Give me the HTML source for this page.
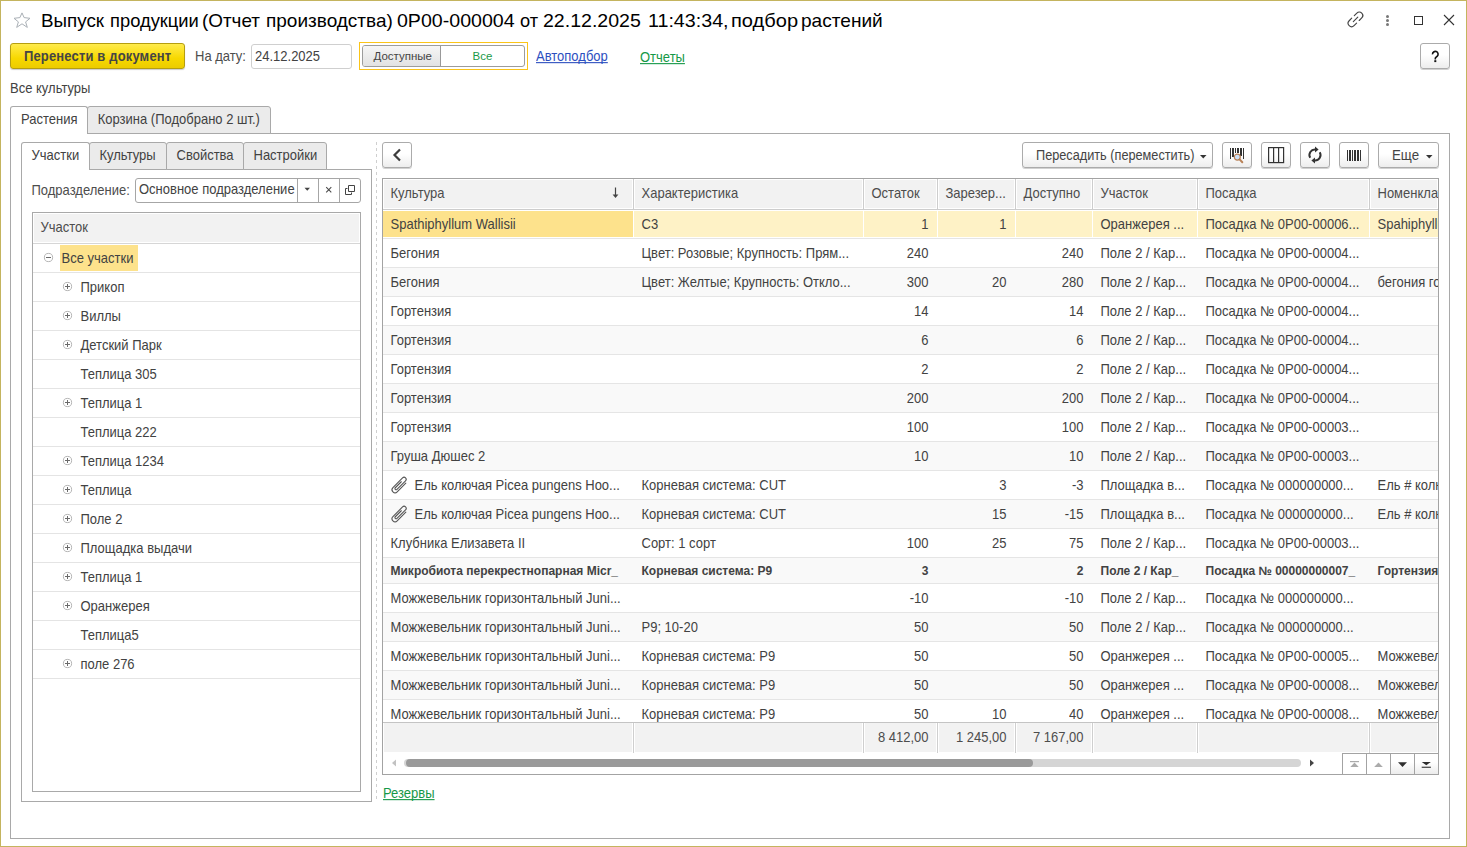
<!DOCTYPE html><html><head><meta charset="utf-8"><style>

*{box-sizing:border-box;margin:0;padding:0}
html,body{width:1467px;height:847px;overflow:hidden;background:#fff}
body{font-family:"Liberation Sans", sans-serif;font-size:13px;color:#424242;position:relative}
.ab{position:absolute}
.t{position:absolute;white-space:nowrap;line-height:16px}
.y{transform:scaleY(1.09);transform-origin:0 12px}
.btn{position:absolute;border:1px solid #ababab;border-radius:3px;background:linear-gradient(#fff 0%,#fff 45%,#ededed 100%);box-shadow:0 1px 0 rgba(0,0,0,.18)}
svg{position:absolute;overflow:visible}

</style></head><body>
<div class="ab" style="left:0px;top:0px;width:1467px;height:847px;border:1px solid #c4b45e"></div>
<svg style="left:0;top:0" width="40" height="40" viewBox="0 0 40 40"><path d="M22 12.9 L24.1 17.6 L30 18.3 L25.6 21.9 L27.3 27.4 L22 23.8 L16.7 27.4 L18.4 21.9 L14 18.3 L19.9 17.6 Z" fill="none" stroke="#aab0b6" stroke-width="1" stroke-linejoin="round"/></svg>
<div class="t" style="left:41.1px;top:10px;font-size:19px;line-height:22px;color:#000;transform:scaleX(0.989);transform-origin:1px 0">Выпуск</div>
<div class="t" style="left:109.6px;top:10px;font-size:19px;line-height:22px;color:#000;transform:scaleX(0.965);transform-origin:1px 0">продукции</div>
<div class="t" style="left:202.2px;top:10px;font-size:19px;line-height:22px;color:#000;transform:scaleX(0.993);transform-origin:1px 0">(Отчет</div>
<div class="t" style="left:266.0px;top:10px;font-size:19px;line-height:22px;color:#000;transform:scaleX(1.000);transform-origin:1px 0">производства)</div>
<div class="t" style="left:397.1px;top:10px;font-size:19px;line-height:22px;color:#000;transform:scaleX(1.031);transform-origin:1px 0">0P00-000004</div>
<div class="t" style="left:519.8px;top:10px;font-size:19px;line-height:22px;color:#000;transform:scaleX(0.959);transform-origin:1px 0">от</div>
<div class="t" style="left:543.3px;top:10px;font-size:19px;line-height:22px;color:#000;transform:scaleX(1.029);transform-origin:1px 0">22.12.2025</div>
<div class="t" style="left:648.2px;top:10px;font-size:19px;line-height:22px;color:#000;transform:scaleX(1.036);transform-origin:1px 0">11:43:34,</div>
<div class="t" style="left:731.0px;top:10px;font-size:19px;line-height:22px;color:#000;transform:scaleX(1.056);transform-origin:1px 0">подбор</div>
<div class="t" style="left:800.6px;top:10px;font-size:19px;line-height:22px;color:#000;transform:scaleX(1.004);transform-origin:1px 0">растений</div>
<svg style="left:1340px;top:5px" width="30" height="30" viewBox="0 0 30 30"><g fill="none" stroke="#444" stroke-width="1.15" stroke-linecap="round"><path d="M14.3 10.6 L16.86 8.06 A3.45 3.45 0 0 1 21.74 12.94 L19.2 15.5"/><path d="M11.71 13.21 L9.16 15.76 A3.45 3.45 0 0 0 14.04 20.64 L16.59 18.09"/><path d="M13.3 16.6 L17.8 12.1"/></g></svg>
<div class="ab" style="left:1385.9px;top:15.0px;width:3px;height:3px;border-radius:50%;background:#777"></div>
<div class="ab" style="left:1385.9px;top:19.0px;width:3px;height:3px;border-radius:50%;background:#777"></div>
<div class="ab" style="left:1385.9px;top:23.0px;width:3px;height:3px;border-radius:50%;background:#777"></div>
<div class="ab" style="left:1414px;top:16px;width:9px;height:9px;border:1.4px solid #333"></div>
<svg style="left:1443px;top:14px" width="12" height="12" viewBox="0 0 12 12"><path d="M1 1 L11 11 M11 1 L1 11" stroke="#333" stroke-width="1.1"/></svg>
<div class="ab" style="left:10px;top:43px;width:175px;height:26px;border:1px solid #b59e10;border-radius:3px;background:linear-gradient(#ffeb4c,#f7d800 60%,#eccc00);box-shadow:0 1px 1px rgba(0,0,0,.2)"></div>
<div class="t" style="left:24px;top:49px;font-weight:700;color:#454545;letter-spacing:0.15px;transform:scaleY(1.09);transform-origin:0 12px;">Перенести в документ</div>
<div class="t y" style="left:195px;top:49px;color:#4d4d4d;">На дату:</div>
<div class="ab" style="left:251px;top:44px;width:101px;height:25px;border:1px solid #cfcfcf;border-radius:3px;background:#fff"></div>
<div class="t y" style="left:255px;top:49px;color:#424242;">24.12.2025</div>
<div class="ab" style="left:359px;top:42px;width:169px;height:28px;border:1px solid #fbc418;background:#fff"></div>
<div class="ab" style="left:362px;top:45px;width:163px;height:22px;border:1px solid #9c9c9c;border-radius:3px;background:#fff;overflow:hidden"><div class="ab" style="left:0;top:0;width:78px;height:100%;background:linear-gradient(#f6f6f6,#e2e2e2);border-right:1px solid #999"></div></div>
<div class="t" style="left:373.5px;top:48px;font-size:11.5px;color:#444;">Доступные</div>
<div class="t" style="left:472.5px;top:48px;font-size:11.5px;color:#1a9a48;">Все</div>
<div class="t y" style="left:536px;top:49px;color:#2d4fbf;text-decoration:underline;text-decoration-skip-ink:none;">Автоподбор</div>
<div class="t y" style="left:640px;top:50px;color:#159847;text-decoration:underline;text-decoration-skip-ink:none;">Отчеты</div>
<div class="btn" style="left:1420px;top:43px;width:30px;height:26px"></div>
<svg style="left:1420px;top:36px" width="30" height="30" viewBox="0 0 30 30"><path d="M12.5 18.4 A2.8 2.8 0 1 1 17.3 20.2 L15.9 21.4 Q15.3 21.9 15.3 22.8 V23.4" fill="none" stroke="#111" stroke-width="1.6"/><rect x="14.3" y="24.2" width="2" height="1.9" fill="#111"/></svg>
<div class="t y" style="left:10px;top:81px;color:#424242;">Все культуры</div>
<div class="ab" style="left:10px;top:133px;width:1440px;height:706px;border:1px solid #a9a9a9"></div>
<div class="ab" style="left:87px;top:106px;width:184px;height:28px;border:1px solid #a9a9a9;border-radius:3px 3px 0 0;background:#ebebeb"></div>
<div class="ab" style="left:10px;top:106px;width:78px;height:28px;border:1px solid #a9a9a9;border-bottom:none;border-radius:3px 3px 0 0;background:#fff"></div>
<div class="t y" style="left:21px;top:112px;">Растения</div>
<div class="t y" style="left:97.7px;top:112px;">Корзина (Подобрано 2 шт.)</div>
<div class="ab" style="left:21px;top:169px;width:351px;height:633px;border:1px solid #a9a9a9"></div>
<div class="ab" style="left:89px;top:142px;width:78px;height:28px;border:1px solid #a9a9a9;border-radius:3px 3px 0 0;background:#ebebeb"></div>
<div class="t y" style="left:99.5px;top:148px;">Культуры</div>
<div class="ab" style="left:166px;top:142px;width:78px;height:28px;border:1px solid #a9a9a9;border-radius:3px 3px 0 0;background:#ebebeb"></div>
<div class="t y" style="left:176.5px;top:148px;">Свойства</div>
<div class="ab" style="left:243px;top:142px;width:84px;height:28px;border:1px solid #a9a9a9;border-radius:3px 3px 0 0;background:#ebebeb"></div>
<div class="t y" style="left:253.5px;top:148px;">Настройки</div>
<div class="ab" style="left:21px;top:142px;width:69px;height:28px;border:1px solid #a9a9a9;border-bottom:none;border-radius:3px 3px 0 0;background:#fff"></div>
<div class="t y" style="left:31.5px;top:148px;">Участки</div>
<div class="t y" style="left:31.5px;top:183px;color:#4d4d4d;">Подразделение:</div>
<div class="ab" style="left:135px;top:178px;width:226px;height:25px;border:1px solid #a6a6a6;border-radius:3px;background:#fff"></div>
<div class="t y" style="left:139px;top:182px;">Основное подразделение</div>
<div class="ab" style="left:297px;top:178px;width:1px;height:25px;background:#a6a6a6"></div>
<div class="ab" style="left:318px;top:178px;width:1px;height:25px;background:#a6a6a6"></div>
<div class="ab" style="left:339px;top:178px;width:1px;height:25px;background:#a6a6a6"></div>
<svg style="left:304px;top:187px" width="8" height="5"><path d="M0.5 0.8 L6 0.8 L3.25 3.8 Z" fill="#444"/></svg>
<svg style="left:325px;top:186px" width="8" height="8"><path d="M1.2 1.2 L6.3 6.3 M6.3 1.2 L1.2 6.3" stroke="#4a4a4a" stroke-width="1.05"/></svg>
<svg style="left:345px;top:185px" width="10" height="10" viewBox="0 0 10 10"><path d="M3.5 0.5 H9.5 V6.5 H3.5 Z" fill="none" stroke="#444" stroke-width="1"/><path d="M2.5 3.5 H0.5 V9.5 H6.5 V7.5" fill="none" stroke="#444" stroke-width="1"/></svg>
<div class="ab" style="left:32px;top:212px;width:329px;height:580px;border:1px solid #a9a9a9;background:#fff"></div>
<div class="ab" style="left:34px;top:214px;width:325px;height:28px;background:#f2f2f2"></div>
<div class="ab" style="left:33px;top:243px;width:327px;height:1px;background:#d6d6d6"></div>
<div class="t y" style="left:40.5px;top:220px;color:#4d4d4d;">Участок</div>
<div class="ab" style="left:33px;top:272px;width:327px;height:1px;background:#e4e4e4"></div>
<div class="ab" style="left:60px;top:245px;width:78px;height:26px;background:#fde28c"></div>
<div class="t y" style="left:61.5px;top:251px;">Все участки</div>
<svg style="left:43.0px;top:252.0px" width="11" height="11" viewBox="0 0 11 11"><circle cx="5.5" cy="5.5" r="4.1" fill="none" stroke="#ababab" stroke-width="0.9"/><path d="M3 5.5 H8" stroke="#6a6a6a" stroke-width="1"/></svg>
<div class="ab" style="left:33px;top:301px;width:327px;height:1px;background:#e4e4e4"></div>
<div class="t y" style="left:80.5px;top:280px;">Прикоп</div>
<svg style="left:62.0px;top:281.0px" width="11" height="11" viewBox="0 0 11 11"><circle cx="5.5" cy="5.5" r="4.1" fill="none" stroke="#ababab" stroke-width="0.9"/><path d="M3 5.5 H8 M5.5 3 V8" stroke="#6a6a6a" stroke-width="1"/></svg>
<div class="ab" style="left:33px;top:330px;width:327px;height:1px;background:#e4e4e4"></div>
<div class="t y" style="left:80.5px;top:309px;">Виллы</div>
<svg style="left:62.0px;top:310.0px" width="11" height="11" viewBox="0 0 11 11"><circle cx="5.5" cy="5.5" r="4.1" fill="none" stroke="#ababab" stroke-width="0.9"/><path d="M3 5.5 H8 M5.5 3 V8" stroke="#6a6a6a" stroke-width="1"/></svg>
<div class="ab" style="left:33px;top:359px;width:327px;height:1px;background:#e4e4e4"></div>
<div class="t y" style="left:80.5px;top:338px;">Детский Парк</div>
<svg style="left:62.0px;top:339.0px" width="11" height="11" viewBox="0 0 11 11"><circle cx="5.5" cy="5.5" r="4.1" fill="none" stroke="#ababab" stroke-width="0.9"/><path d="M3 5.5 H8 M5.5 3 V8" stroke="#6a6a6a" stroke-width="1"/></svg>
<div class="ab" style="left:33px;top:388px;width:327px;height:1px;background:#e4e4e4"></div>
<div class="t y" style="left:80.5px;top:367px;">Теплица 305</div>
<div class="ab" style="left:33px;top:417px;width:327px;height:1px;background:#e4e4e4"></div>
<div class="t y" style="left:80.5px;top:396px;">Теплица 1</div>
<svg style="left:62.0px;top:397.0px" width="11" height="11" viewBox="0 0 11 11"><circle cx="5.5" cy="5.5" r="4.1" fill="none" stroke="#ababab" stroke-width="0.9"/><path d="M3 5.5 H8 M5.5 3 V8" stroke="#6a6a6a" stroke-width="1"/></svg>
<div class="ab" style="left:33px;top:446px;width:327px;height:1px;background:#e4e4e4"></div>
<div class="t y" style="left:80.5px;top:425px;">Теплица 222</div>
<div class="ab" style="left:33px;top:475px;width:327px;height:1px;background:#e4e4e4"></div>
<div class="t y" style="left:80.5px;top:454px;">Теплица 1234</div>
<svg style="left:62.0px;top:455.0px" width="11" height="11" viewBox="0 0 11 11"><circle cx="5.5" cy="5.5" r="4.1" fill="none" stroke="#ababab" stroke-width="0.9"/><path d="M3 5.5 H8 M5.5 3 V8" stroke="#6a6a6a" stroke-width="1"/></svg>
<div class="ab" style="left:33px;top:504px;width:327px;height:1px;background:#e4e4e4"></div>
<div class="t y" style="left:80.5px;top:483px;">Теплица</div>
<svg style="left:62.0px;top:484.0px" width="11" height="11" viewBox="0 0 11 11"><circle cx="5.5" cy="5.5" r="4.1" fill="none" stroke="#ababab" stroke-width="0.9"/><path d="M3 5.5 H8 M5.5 3 V8" stroke="#6a6a6a" stroke-width="1"/></svg>
<div class="ab" style="left:33px;top:533px;width:327px;height:1px;background:#e4e4e4"></div>
<div class="t y" style="left:80.5px;top:512px;">Поле 2</div>
<svg style="left:62.0px;top:513.0px" width="11" height="11" viewBox="0 0 11 11"><circle cx="5.5" cy="5.5" r="4.1" fill="none" stroke="#ababab" stroke-width="0.9"/><path d="M3 5.5 H8 M5.5 3 V8" stroke="#6a6a6a" stroke-width="1"/></svg>
<div class="ab" style="left:33px;top:562px;width:327px;height:1px;background:#e4e4e4"></div>
<div class="t y" style="left:80.5px;top:541px;">Площадка выдачи</div>
<svg style="left:62.0px;top:542.0px" width="11" height="11" viewBox="0 0 11 11"><circle cx="5.5" cy="5.5" r="4.1" fill="none" stroke="#ababab" stroke-width="0.9"/><path d="M3 5.5 H8 M5.5 3 V8" stroke="#6a6a6a" stroke-width="1"/></svg>
<div class="ab" style="left:33px;top:591px;width:327px;height:1px;background:#e4e4e4"></div>
<div class="t y" style="left:80.5px;top:570px;">Теплица 1</div>
<svg style="left:62.0px;top:571.0px" width="11" height="11" viewBox="0 0 11 11"><circle cx="5.5" cy="5.5" r="4.1" fill="none" stroke="#ababab" stroke-width="0.9"/><path d="M3 5.5 H8 M5.5 3 V8" stroke="#6a6a6a" stroke-width="1"/></svg>
<div class="ab" style="left:33px;top:620px;width:327px;height:1px;background:#e4e4e4"></div>
<div class="t y" style="left:80.5px;top:599px;">Оранжерея</div>
<svg style="left:62.0px;top:600.0px" width="11" height="11" viewBox="0 0 11 11"><circle cx="5.5" cy="5.5" r="4.1" fill="none" stroke="#ababab" stroke-width="0.9"/><path d="M3 5.5 H8 M5.5 3 V8" stroke="#6a6a6a" stroke-width="1"/></svg>
<div class="ab" style="left:33px;top:649px;width:327px;height:1px;background:#e4e4e4"></div>
<div class="t y" style="left:80.5px;top:628px;">Теплица5</div>
<div class="ab" style="left:33px;top:678px;width:327px;height:1px;background:#e4e4e4"></div>
<div class="t y" style="left:80.5px;top:657px;">поле 276</div>
<svg style="left:62.0px;top:658.0px" width="11" height="11" viewBox="0 0 11 11"><circle cx="5.5" cy="5.5" r="4.1" fill="none" stroke="#ababab" stroke-width="0.9"/><path d="M3 5.5 H8 M5.5 3 V8" stroke="#6a6a6a" stroke-width="1"/></svg>
<div class="ab" style="left:376px;top:142px;width:1px;height:658px;background:repeating-linear-gradient(#cfcfcf 0 3px,transparent 3px 6px)"></div>
<div class="btn" style="left:382px;top:142px;width:30px;height:26px"></div>
<svg style="left:392px;top:148px" width="10" height="14" viewBox="0 0 10 14"><path d="M8 1.5 L2.5 7 L8 12.5" fill="none" stroke="#3c3c3c" stroke-width="2.2"/></svg>
<div class="btn" style="left:1022px;top:142px;width:191px;height:26px"></div>
<div class="t" style="left:1036px;top:147px;font-size:14px;color:#444;transform:scaleX(0.908);transform-origin:0 0;">Пересадить (переместить)</div>
<svg style="left:1200px;top:155px" width="7" height="4"><path d="M0 0 H6.5 L3.25 3.5 Z" fill="#333"/></svg>
<div class="btn" style="left:1222px;top:142px;width:30px;height:26px"></div>
<div class="btn" style="left:1261px;top:142px;width:30px;height:26px"></div>
<div class="btn" style="left:1300px;top:142px;width:30px;height:26px"></div>
<div class="btn" style="left:1339px;top:142px;width:30px;height:26px"></div>
<svg style="left:1229px;top:147px" width="18" height="18" viewBox="0 0 18 18"><g fill="#333"><rect x="1" y="1" width="1" height="11"/><rect x="3" y="1" width="2" height="9"/><rect x="6" y="1" width="1" height="5"/><rect x="8" y="1" width="2" height="5"/><rect x="11" y="1" width="2" height="8"/><rect x="14" y="1" width="1" height="11"/></g><circle cx="8.3" cy="10.1" r="3" fill="#cde0f7" stroke="#b98258" stroke-width="1.2"/><path d="M10.6 12.4 L13.3 15.3" stroke="#b98258" stroke-width="2" stroke-linecap="round"/></svg>
<svg style="left:1267px;top:146px" width="18" height="18" viewBox="0 0 18 18"><g fill="none" stroke="#333" stroke-width="1.2"><rect x="1.6" y="1.6" width="15" height="15"/><path d="M6.6 1.6 V16.6 M11.6 1.6 V16.6"/></g></svg>
<svg style="left:1305px;top:145px" width="20" height="20" viewBox="0 0 20 20"><g fill="none" stroke="#333" stroke-width="2"><path d="M5.2 12.75 A5.5 5.5 0 0 1 10.5 4.5"/><path d="M14.76 7.25 A5.5 5.5 0 0 1 9.5 15.5"/></g><path d="M10 1.6 L13.6 4.5 L10 7.4 Z" fill="#333"/><path d="M10 12.6 L6.4 15.5 L10 18.4 Z" fill="#333"/></svg>
<svg style="left:1347px;top:150px" width="16" height="11" viewBox="0 0 16 11"><g fill="#333"><rect x="0" y="0" width="1" height="11"/><rect x="2" y="0" width="2" height="11"/><rect x="5" y="0" width="1" height="11"/><rect x="7" y="0" width="2" height="11"/><rect x="10" y="0" width="2" height="11"/><rect x="13" y="0" width="1" height="11"/></g></svg>
<div class="btn" style="left:1378px;top:142px;width:61px;height:26px"></div>
<div class="t" style="left:1392px;top:147px;font-size:14px;color:#444;transform:scaleX(0.95);transform-origin:0 0;">Еще</div>
<svg style="left:1426px;top:155px" width="7" height="4"><path d="M0 0 H6.5 L3.25 3.5 Z" fill="#333"/></svg>
<div class="ab" style="left:382px;top:178px;width:1057px;height:597px;border:1px solid #a3a3a3;background:#fff"></div>
<div class="ab" style="left:384px;top:180px;width:248px;height:28px;background:#f2f2f2"></div>
<div class="ab" style="left:635px;top:180px;width:227px;height:28px;background:#f2f2f2"></div>
<div class="ab" style="left:865px;top:180px;width:71px;height:28px;background:#f2f2f2"></div>
<div class="ab" style="left:939px;top:180px;width:75px;height:28px;background:#f2f2f2"></div>
<div class="ab" style="left:1017px;top:180px;width:74px;height:28px;background:#f2f2f2"></div>
<div class="ab" style="left:1094px;top:180px;width:102px;height:28px;background:#f2f2f2"></div>
<div class="ab" style="left:1199px;top:180px;width:169px;height:28px;background:#f2f2f2"></div>
<div class="ab" style="left:1371px;top:180px;width:66px;height:28px;background:#f2f2f2"></div>
<div class="ab" style="left:633px;top:179px;width:1px;height:30px;background:#cdcdcd"></div>
<div class="ab" style="left:863px;top:179px;width:1px;height:30px;background:#cdcdcd"></div>
<div class="ab" style="left:937px;top:179px;width:1px;height:30px;background:#cdcdcd"></div>
<div class="ab" style="left:1015px;top:179px;width:1px;height:30px;background:#cdcdcd"></div>
<div class="ab" style="left:1092px;top:179px;width:1px;height:30px;background:#cdcdcd"></div>
<div class="ab" style="left:1197px;top:179px;width:1px;height:30px;background:#cdcdcd"></div>
<div class="ab" style="left:1369px;top:179px;width:1px;height:30px;background:#cdcdcd"></div>
<div class="ab" style="left:383px;top:209px;width:1055px;height:1px;background:#cdcdcd"></div>
<div class="ab" style="left:383px;top:179px;width:1055px;height:30px;overflow:hidden">
<div class="t y" style="left:7.5px;top:7px;color:#4d4d4d;">Культура</div>
<div class="t y" style="left:258.5px;top:7px;color:#4d4d4d;">Характеристика</div>
<div class="t y" style="left:488.5px;top:7px;color:#4d4d4d;">Остаток</div>
<div class="t y" style="left:562.5px;top:7px;color:#4d4d4d;">Зарезер...</div>
<div class="t y" style="left:640.5px;top:7px;color:#4d4d4d;">Доступно</div>
<div class="t y" style="left:717.5px;top:7px;color:#4d4d4d;">Участок</div>
<div class="t y" style="left:822.5px;top:7px;color:#4d4d4d;">Посадка</div>
<div class="t y" style="left:994.5px;top:7px;color:#4d4d4d;">Номенклатура</div>
</div>
<svg style="left:610px;top:186px" width="12" height="14" viewBox="0 0 12 14"><path d="M5.5 1.5 V10" stroke="#444" stroke-width="1.2"/><path d="M2.6 8.6 L5.5 12 L8.4 8.6 Z" fill="#444"/></svg>
<div class="ab" style="left:383px;top:210px;width:1055px;height:512px;overflow:hidden">
<div class="ab" style="left:0px;top:1px;width:1055px;height:26px;background:#fef2c6"></div>
<div class="ab" style="left:0px;top:1px;width:250px;height:26px;background:#fde28c"></div>
<div class="ab" style="left:250px;top:1px;width:1px;height:26px;background:#fff"></div>
<div class="ab" style="left:480px;top:1px;width:1px;height:26px;background:#fff"></div>
<div class="ab" style="left:554px;top:1px;width:1px;height:26px;background:#fff"></div>
<div class="ab" style="left:632px;top:1px;width:1px;height:26px;background:#fff"></div>
<div class="ab" style="left:709px;top:1px;width:1px;height:26px;background:#fff"></div>
<div class="ab" style="left:814px;top:1px;width:1px;height:26px;background:#fff"></div>
<div class="ab" style="left:986px;top:1px;width:1px;height:26px;background:#fff"></div>
<div class="ab" style="left:0px;top:28px;width:1055px;height:1px;background:#e5e5e5"></div>
<div class="t y" style="left:7.5px;top:7px;">Spathiphyllum Wallisii</div>
<div class="t y" style="left:258.5px;top:7px;">C3</div>
<div class="t y" style="left:480px;top:7px;width:65.5px;text-align:right;">1</div>
<div class="t y" style="left:554px;top:7px;width:69.5px;text-align:right;">1</div>
<div class="t y" style="left:717.5px;top:7px;">Оранжерея ...</div>
<div class="t y" style="left:822.5px;top:7px;">Посадка № 0P00-00006...</div>
<div class="t y" style="left:994.5px;top:7px;">Spahiphyllum</div>
<div class="ab" style="left:0px;top:57px;width:1055px;height:1px;background:#e5e5e5"></div>
<div class="t y" style="left:7.5px;top:36px;">Бегония</div>
<div class="t y" style="left:258.5px;top:36px;">Цвет: Розовые; Крупность: Прям...</div>
<div class="t y" style="left:480px;top:36px;width:65.5px;text-align:right;">240</div>
<div class="t y" style="left:632px;top:36px;width:68.5px;text-align:right;">240</div>
<div class="t y" style="left:717.5px;top:36px;">Поле 2 / Кар...</div>
<div class="t y" style="left:822.5px;top:36px;">Посадка № 0P00-00004...</div>
<div class="ab" style="left:0px;top:58px;width:1055px;height:28px;background:#f9f9f9"></div>
<div class="ab" style="left:0px;top:86px;width:1055px;height:1px;background:#e5e5e5"></div>
<div class="t y" style="left:7.5px;top:65px;">Бегония</div>
<div class="t y" style="left:258.5px;top:65px;">Цвет: Желтые; Крупность: Откло...</div>
<div class="t y" style="left:480px;top:65px;width:65.5px;text-align:right;">300</div>
<div class="t y" style="left:554px;top:65px;width:69.5px;text-align:right;">20</div>
<div class="t y" style="left:632px;top:65px;width:68.5px;text-align:right;">280</div>
<div class="t y" style="left:717.5px;top:65px;">Поле 2 / Кар...</div>
<div class="t y" style="left:822.5px;top:65px;">Посадка № 0P00-00004...</div>
<div class="t y" style="left:994.5px;top:65px;">бегония голд</div>
<div class="ab" style="left:0px;top:115px;width:1055px;height:1px;background:#e5e5e5"></div>
<div class="t y" style="left:7.5px;top:94px;">Гортензия</div>
<div class="t y" style="left:480px;top:94px;width:65.5px;text-align:right;">14</div>
<div class="t y" style="left:632px;top:94px;width:68.5px;text-align:right;">14</div>
<div class="t y" style="left:717.5px;top:94px;">Поле 2 / Кар...</div>
<div class="t y" style="left:822.5px;top:94px;">Посадка № 0P00-00004...</div>
<div class="ab" style="left:0px;top:116px;width:1055px;height:28px;background:#f9f9f9"></div>
<div class="ab" style="left:0px;top:144px;width:1055px;height:1px;background:#e5e5e5"></div>
<div class="t y" style="left:7.5px;top:123px;">Гортензия</div>
<div class="t y" style="left:480px;top:123px;width:65.5px;text-align:right;">6</div>
<div class="t y" style="left:632px;top:123px;width:68.5px;text-align:right;">6</div>
<div class="t y" style="left:717.5px;top:123px;">Поле 2 / Кар...</div>
<div class="t y" style="left:822.5px;top:123px;">Посадка № 0P00-00004...</div>
<div class="ab" style="left:0px;top:173px;width:1055px;height:1px;background:#e5e5e5"></div>
<div class="t y" style="left:7.5px;top:152px;">Гортензия</div>
<div class="t y" style="left:480px;top:152px;width:65.5px;text-align:right;">2</div>
<div class="t y" style="left:632px;top:152px;width:68.5px;text-align:right;">2</div>
<div class="t y" style="left:717.5px;top:152px;">Поле 2 / Кар...</div>
<div class="t y" style="left:822.5px;top:152px;">Посадка № 0P00-00004...</div>
<div class="ab" style="left:0px;top:174px;width:1055px;height:28px;background:#f9f9f9"></div>
<div class="ab" style="left:0px;top:202px;width:1055px;height:1px;background:#e5e5e5"></div>
<div class="t y" style="left:7.5px;top:181px;">Гортензия</div>
<div class="t y" style="left:480px;top:181px;width:65.5px;text-align:right;">200</div>
<div class="t y" style="left:632px;top:181px;width:68.5px;text-align:right;">200</div>
<div class="t y" style="left:717.5px;top:181px;">Поле 2 / Кар...</div>
<div class="t y" style="left:822.5px;top:181px;">Посадка № 0P00-00004...</div>
<div class="ab" style="left:0px;top:231px;width:1055px;height:1px;background:#e5e5e5"></div>
<div class="t y" style="left:7.5px;top:210px;">Гортензия</div>
<div class="t y" style="left:480px;top:210px;width:65.5px;text-align:right;">100</div>
<div class="t y" style="left:632px;top:210px;width:68.5px;text-align:right;">100</div>
<div class="t y" style="left:717.5px;top:210px;">Поле 2 / Кар...</div>
<div class="t y" style="left:822.5px;top:210px;">Посадка № 0P00-00003...</div>
<div class="ab" style="left:0px;top:232px;width:1055px;height:28px;background:#f9f9f9"></div>
<div class="ab" style="left:0px;top:260px;width:1055px;height:1px;background:#e5e5e5"></div>
<div class="t y" style="left:7.5px;top:239px;">Груша Дюшес 2</div>
<div class="t y" style="left:480px;top:239px;width:65.5px;text-align:right;">10</div>
<div class="t y" style="left:632px;top:239px;width:68.5px;text-align:right;">10</div>
<div class="t y" style="left:717.5px;top:239px;">Поле 2 / Кар...</div>
<div class="t y" style="left:822.5px;top:239px;">Посадка № 0P00-00003...</div>
<div class="ab" style="left:0px;top:289px;width:1055px;height:1px;background:#e5e5e5"></div>
<svg style="left:0;top:0" width="30" height="291"><g transform="translate(12 279.6) rotate(-45)"><path d="M10 -1.1 L1.5 -1.1 A1.2 1.2 0 0 0 1.5 1.3 L13.6 1.3 A2.1 2.1 0 0 0 13.6 -2.9 L0 -2.9 A3 3 0 0 0 0 3.1 L12.2 3.1" fill="none" stroke="#555" stroke-width="1.1" stroke-linecap="round"/></g></svg>
<div class="t y" style="left:31.5px;top:268px;">Ель колючая Picea pungens Hoo...</div>
<div class="t y" style="left:258.5px;top:268px;">Корневая система: CUT</div>
<div class="t y" style="left:554px;top:268px;width:69.5px;text-align:right;">3</div>
<div class="t y" style="left:632px;top:268px;width:68.5px;text-align:right;">-3</div>
<div class="t y" style="left:717.5px;top:268px;">Площадка в...</div>
<div class="t y" style="left:822.5px;top:268px;">Посадка № 000000000...</div>
<div class="t y" style="left:994.5px;top:268px;">Ель # колючая</div>
<div class="ab" style="left:0px;top:290px;width:1055px;height:28px;background:#f9f9f9"></div>
<div class="ab" style="left:0px;top:318px;width:1055px;height:1px;background:#e5e5e5"></div>
<svg style="left:0;top:0" width="30" height="320"><g transform="translate(12 308.6) rotate(-45)"><path d="M10 -1.1 L1.5 -1.1 A1.2 1.2 0 0 0 1.5 1.3 L13.6 1.3 A2.1 2.1 0 0 0 13.6 -2.9 L0 -2.9 A3 3 0 0 0 0 3.1 L12.2 3.1" fill="none" stroke="#555" stroke-width="1.1" stroke-linecap="round"/></g></svg>
<div class="t y" style="left:31.5px;top:297px;">Ель колючая Picea pungens Hoo...</div>
<div class="t y" style="left:258.5px;top:297px;">Корневая система: CUT</div>
<div class="t y" style="left:554px;top:297px;width:69.5px;text-align:right;">15</div>
<div class="t y" style="left:632px;top:297px;width:68.5px;text-align:right;">-15</div>
<div class="t y" style="left:717.5px;top:297px;">Площадка в...</div>
<div class="t y" style="left:822.5px;top:297px;">Посадка № 000000000...</div>
<div class="t y" style="left:994.5px;top:297px;">Ель # колючая</div>
<div class="ab" style="left:0px;top:347px;width:1055px;height:1px;background:#e5e5e5"></div>
<div class="t y" style="left:7.5px;top:326px;">Клубника Елизавета II</div>
<div class="t y" style="left:258.5px;top:326px;">Сорт: 1 сорт</div>
<div class="t y" style="left:480px;top:326px;width:65.5px;text-align:right;">100</div>
<div class="t y" style="left:554px;top:326px;width:69.5px;text-align:right;">25</div>
<div class="t y" style="left:632px;top:326px;width:68.5px;text-align:right;">75</div>
<div class="t y" style="left:717.5px;top:326px;">Поле 2 / Кар...</div>
<div class="t y" style="left:822.5px;top:326px;">Посадка № 0P00-00003...</div>
<div class="ab" style="left:0px;top:348px;width:1055px;height:25px;background:#f9f9f9"></div>
<div class="ab" style="left:0px;top:373px;width:1055px;height:1px;background:#e5e5e5"></div>
<div class="t" style="left:7.5px;top:353px;font-size:12px;font-weight:700;">Микробиота перекрестнопарная Micr_</div>
<div class="t" style="left:258.5px;top:353px;font-size:12px;font-weight:700;">Корневая система: P9</div>
<div class="t" style="left:480px;top:353px;width:65.5px;text-align:right;font-size:12px;font-weight:700;">3</div>
<div class="t" style="left:632px;top:353px;width:68.5px;text-align:right;font-size:12px;font-weight:700;">2</div>
<div class="t" style="left:717.5px;top:353px;font-size:12px;font-weight:700;">Поле 2 / Кар_</div>
<div class="t" style="left:822.5px;top:353px;font-size:12px;font-weight:700;">Посадка № 00000000007_</div>
<div class="t" style="left:994.5px;top:353px;font-size:12px;font-weight:700;">Гортензия</div>
<div class="ab" style="left:0px;top:402px;width:1055px;height:1px;background:#e5e5e5"></div>
<div class="t y" style="left:7.5px;top:381px;">Можжевельник горизонтальный Juni...</div>
<div class="t y" style="left:480px;top:381px;width:65.5px;text-align:right;">-10</div>
<div class="t y" style="left:632px;top:381px;width:68.5px;text-align:right;">-10</div>
<div class="t y" style="left:717.5px;top:381px;">Поле 2 / Кар...</div>
<div class="t y" style="left:822.5px;top:381px;">Посадка № 000000000...</div>
<div class="ab" style="left:0px;top:403px;width:1055px;height:28px;background:#f9f9f9"></div>
<div class="ab" style="left:0px;top:431px;width:1055px;height:1px;background:#e5e5e5"></div>
<div class="t y" style="left:7.5px;top:410px;">Можжевельник горизонтальный Juni...</div>
<div class="t y" style="left:258.5px;top:410px;">P9; 10-20</div>
<div class="t y" style="left:480px;top:410px;width:65.5px;text-align:right;">50</div>
<div class="t y" style="left:632px;top:410px;width:68.5px;text-align:right;">50</div>
<div class="t y" style="left:717.5px;top:410px;">Поле 2 / Кар...</div>
<div class="t y" style="left:822.5px;top:410px;">Посадка № 000000000...</div>
<div class="ab" style="left:0px;top:460px;width:1055px;height:1px;background:#e5e5e5"></div>
<div class="t y" style="left:7.5px;top:439px;">Можжевельник горизонтальный Juni...</div>
<div class="t y" style="left:258.5px;top:439px;">Корневая система: P9</div>
<div class="t y" style="left:480px;top:439px;width:65.5px;text-align:right;">50</div>
<div class="t y" style="left:632px;top:439px;width:68.5px;text-align:right;">50</div>
<div class="t y" style="left:717.5px;top:439px;">Оранжерея ...</div>
<div class="t y" style="left:822.5px;top:439px;">Посадка № 0P00-00005...</div>
<div class="t y" style="left:994.5px;top:439px;">Можжевельник</div>
<div class="ab" style="left:0px;top:461px;width:1055px;height:28px;background:#f9f9f9"></div>
<div class="ab" style="left:0px;top:489px;width:1055px;height:1px;background:#e5e5e5"></div>
<div class="t y" style="left:7.5px;top:468px;">Можжевельник горизонтальный Juni...</div>
<div class="t y" style="left:258.5px;top:468px;">Корневая система: P9</div>
<div class="t y" style="left:480px;top:468px;width:65.5px;text-align:right;">50</div>
<div class="t y" style="left:632px;top:468px;width:68.5px;text-align:right;">50</div>
<div class="t y" style="left:717.5px;top:468px;">Оранжерея ...</div>
<div class="t y" style="left:822.5px;top:468px;">Посадка № 0P00-00008...</div>
<div class="t y" style="left:994.5px;top:468px;">Можжевельник</div>
<div class="ab" style="left:0px;top:518px;width:1055px;height:1px;background:#e5e5e5"></div>
<div class="t y" style="left:7.5px;top:497px;">Можжевельник горизонтальный Juni...</div>
<div class="t y" style="left:258.5px;top:497px;">Корневая система: P9</div>
<div class="t y" style="left:480px;top:497px;width:65.5px;text-align:right;">50</div>
<div class="t y" style="left:554px;top:497px;width:69.5px;text-align:right;">10</div>
<div class="t y" style="left:632px;top:497px;width:68.5px;text-align:right;">40</div>
<div class="t y" style="left:717.5px;top:497px;">Оранжерея ...</div>
<div class="t y" style="left:822.5px;top:497px;">Посадка № 0P00-00008...</div>
<div class="t y" style="left:994.5px;top:497px;">Можжевельник</div>
</div>
<div class="ab" style="left:383px;top:722px;width:1055px;height:1px;background:#c4c4c4"></div>
<div class="ab" style="left:384px;top:723px;width:248px;height:29px;background:#f2f2f2"></div>
<div class="ab" style="left:635px;top:723px;width:227px;height:29px;background:#f2f2f2"></div>
<div class="ab" style="left:865px;top:723px;width:71px;height:29px;background:#f2f2f2"></div>
<div class="ab" style="left:939px;top:723px;width:75px;height:29px;background:#f2f2f2"></div>
<div class="ab" style="left:1017px;top:723px;width:74px;height:29px;background:#f2f2f2"></div>
<div class="ab" style="left:1094px;top:723px;width:102px;height:29px;background:#f2f2f2"></div>
<div class="ab" style="left:1199px;top:723px;width:169px;height:29px;background:#f2f2f2"></div>
<div class="ab" style="left:1371px;top:723px;width:66px;height:29px;background:#f2f2f2"></div>
<div class="ab" style="left:633px;top:723px;width:1px;height:30px;background:#cfcfcf"></div>
<div class="ab" style="left:863px;top:723px;width:1px;height:30px;background:#cfcfcf"></div>
<div class="ab" style="left:937px;top:723px;width:1px;height:30px;background:#cfcfcf"></div>
<div class="ab" style="left:1015px;top:723px;width:1px;height:30px;background:#cfcfcf"></div>
<div class="ab" style="left:1092px;top:723px;width:1px;height:30px;background:#cfcfcf"></div>
<div class="ab" style="left:1197px;top:723px;width:1px;height:30px;background:#cfcfcf"></div>
<div class="ab" style="left:1369px;top:723px;width:1px;height:30px;background:#cfcfcf"></div>
<div class="t y" style="left:863px;top:730px;width:65.5px;text-align:right;color:#4d4d4d">8 412,00</div>
<div class="t y" style="left:937px;top:730px;width:69.5px;text-align:right;color:#4d4d4d">1 245,00</div>
<div class="t y" style="left:1015px;top:730px;width:68.5px;text-align:right;color:#4d4d4d">7 167,00</div>
<div class="ab" style="left:404px;top:759px;width:897px;height:8px;background:#d5d5d5;border-radius:4px"></div>
<div class="ab" style="left:406px;top:759px;width:627px;height:8px;background:#9a9a9a;border-radius:4px"></div>
<svg style="left:391px;top:759px" width="6" height="8"><path d="M5 0.5 V7.5 L1 4 Z" fill="#c2c2c2"/></svg>
<svg style="left:1309px;top:759px" width="6" height="8"><path d="M1 0.5 V7.5 L5 4 Z" fill="#444"/></svg>
<div class="ab" style="left:1342px;top:753px;width:97px;height:22px;border:1px solid #a3a3a3;background:#fff"></div>
<div class="ab" style="left:1366px;top:753px;width:1px;height:22px;background:#a3a3a3"></div>
<div class="ab" style="left:1390px;top:753px;width:1px;height:22px;background:#a3a3a3"></div>
<div class="ab" style="left:1414px;top:753px;width:1px;height:22px;background:#a3a3a3"></div>
<div class="ab" style="left:1391px;top:754px;width:23px;height:20px;background:linear-gradient(#fff 40%,#ececec)"></div>
<div class="ab" style="left:1415px;top:754px;width:23px;height:20px;background:linear-gradient(#fff 40%,#ececec)"></div>
<svg style="left:1344px;top:756px" width="22" height="20"><rect x="6" y="5" width="9" height="1.2" fill="#ababab"/><path d="M6.3 11 L10.5 6.6 L14.7 11 Z" fill="#ababab"/></svg>
<svg style="left:1368px;top:756px" width="22" height="20"><path d="M6.2 11 L10.5 6.6 L14.8 11 Z" fill="#ababab"/></svg>
<svg style="left:1392px;top:756px" width="22" height="20"><path d="M6 6.2 L10.5 11 L15 6.2 Z" fill="#2f2f2f"/></svg>
<svg style="left:1416px;top:756px" width="22" height="20"><path d="M5.7 5.9 L10.3 9.3 L14.9 5.9 Z" fill="#2f2f2f"/><rect x="5.7" y="10.7" width="9.2" height="1.1" fill="#2f2f2f"/></svg>
<div class="t y" style="left:383px;top:786px;color:#159847;text-decoration:underline;text-decoration-skip-ink:none;">Резервы</div>
</body></html>
